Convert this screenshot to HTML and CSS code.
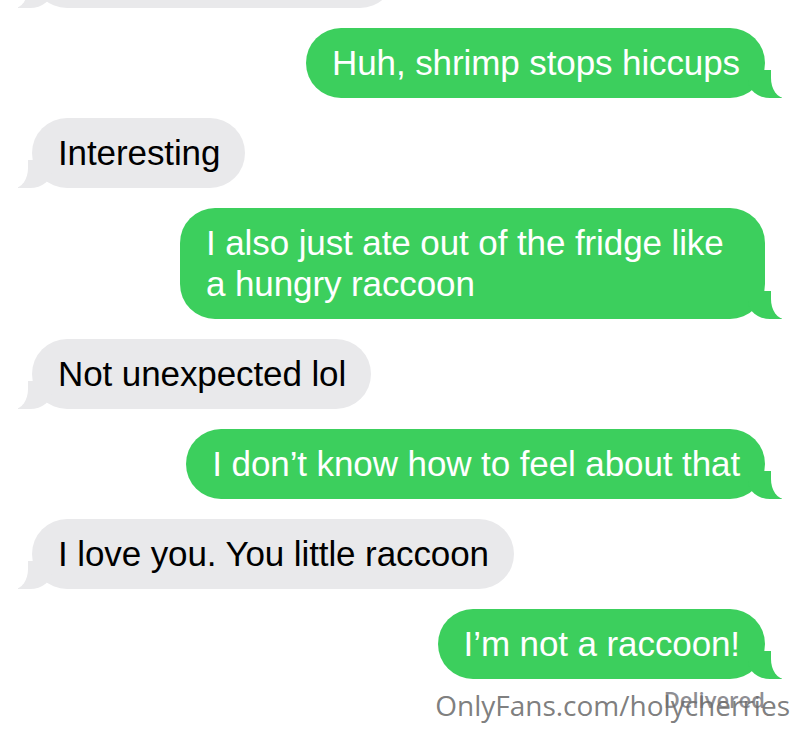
FILE: index.html
```html
<!DOCTYPE html>
<html lang="en">
<head>
    <meta charset="UTF-8">
    <meta name="viewport" content="width=device-width, initial-scale=1.0">
    <title>Messages</title>
    <link rel="stylesheet" href="styles.css">
</head>
<body>
    <div class="thread">
        <div class="msg received earlier"></div>
        <div class="msg sent">Huh, shrimp stops hiccups</div>
        <div class="msg received">Interesting</div>
        <div class="msg sent">I also just ate out of the fridge like a hungry raccoon</div>
        <div class="msg received">Not unexpected lol</div>
        <div class="msg sent">I don’t know how to feel about that</div>
        <div class="msg received">I love you. You little raccoon</div>
        <div class="msg sent">I’m not a raccoon!</div>
        <div class="footer">
            <span class="status">Delivered</span>
            <span class="mark">OnlyFans.com/holycherries</span>
        </div>
    </div>
</body>
</html>
```

FILE: styles.css
```css
body {
    margin: 0;
    background: #fff;
    font-family: "Liberation Sans", Arial, sans-serif;
    overflow: hidden;
}
.thread {
    display: flex;
    flex-direction: column;
    gap: 20px;
    padding: 0 35px 0 32px;
}
.msg {
    position: relative;
    max-width: 534px;
    padding: 14px 25px 15px 26px;
    border-radius: 35px;
    font-size: 35px;
    line-height: 41px;
    letter-spacing: -0.1px;
}
.received {
    align-self: flex-start;
    background: #e9e9eb;
    color: #000;
}
.sent {
    align-self: flex-end;
    background: #3ccf5d;
    color: #fff;
}
/* previous bubble, scrolled mostly out of view */
.earlier {
    margin-top: -62px;
    width: 312px;
    height: 41px;
}

/* bubble tails */
.msg::before,
.msg::after {
    content: "";
    position: absolute;
    bottom: 0;
    height: 28px;
}
.sent::before {
    right: -17px;
    width: 34px;
    background: #3ccf5d;
    border-bottom-left-radius: 22px 18px;
}
.sent::after {
    right: -36px;
    width: 30px;
    background: #fff;
    border-bottom-left-radius: 14px 20px;
}
.received::before {
    left: -14px;
    width: 34px;
    background: #e9e9eb;
    border-bottom-right-radius: 22px 18px;
}
.received::after {
    left: -34px;
    width: 30px;
    background: #fff;
    border-bottom-right-radius: 14px 20px;
}

.footer {
    position: relative;
    align-self: flex-end;
    margin-top: -11px;
    height: 40px;
}
.status {
    display: block;
    font-family: "Open Sans", "DejaVu Sans", sans-serif;
    font-size: 22px;
    font-weight: 600;
    line-height: 22px;
    color: #8e8e93;
}
/* watermark laid over the status line */
.mark {
    position: absolute;
    right: -25px;
    top: -3px;
    white-space: nowrap;
    font-family: "Open Sans", "DejaVu Sans", sans-serif;
    font-size: 28px;
    line-height: 40px;
    color: rgba(110, 110, 110, 0.9);
}
```
